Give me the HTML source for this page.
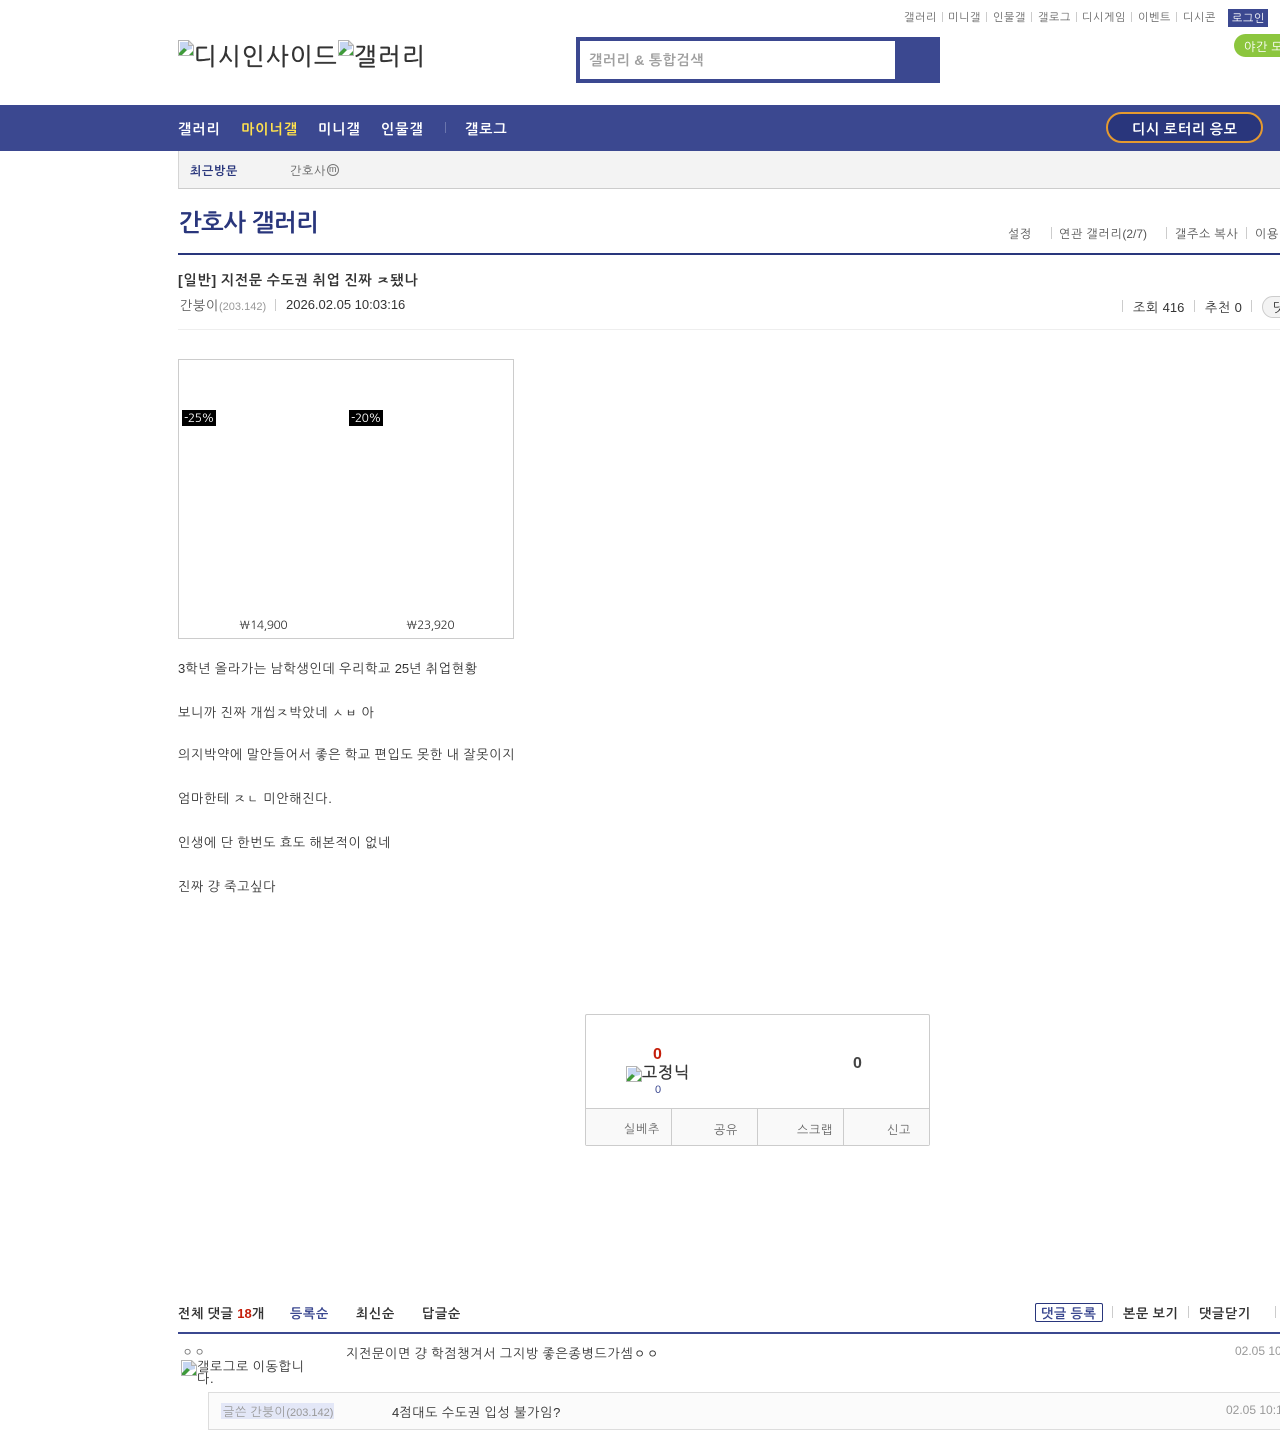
<!DOCTYPE html>
<html lang="ko"><head><meta charset="utf-8"><title>간호사 갤러리</title>
<style>
html,body{margin:0;padding:0;background:#fff}
body{position:relative;width:1280px;height:1438px;overflow:hidden;font-family:"Liberation Sans","NanumGothic","Noto Sans CJK KR",sans-serif;color:#333}
.t,.b,.s{position:absolute}
.t{white-space:nowrap;line-height:20px;height:20px;letter-spacing:.06em;word-spacing:-.06em}
.n{letter-spacing:0;word-spacing:0}
.s{width:1px;background:#ccc}
.i{position:absolute;width:16px;height:16px}
.top{font-size:11px;color:#666;top:8px}
.t.nav{font-size:14px;font-weight:bold;color:#fff;top:119px;letter-spacing:.08em;word-spacing:-.08em}
.lnk{font-size:12px;color:#555;top:224px}
.m{font-size:13px;color:#333;top:298px}
.p{font-size:13px;color:#333;left:178px}
.bt{font-size:12px;color:#666}
.cm{font-size:13px;font-weight:bold;color:#333;top:1304px}
.t.w{font-family:"NanumGothic","Liberation Sans",sans-serif;letter-spacing:-.5px;word-spacing:0}
</style></head><body>
<svg width="0" height="0" style="position:absolute"><defs><symbol id="br" viewBox="0 0 16 16"><path d="M.5.5h10l5 5v10H.5z" fill="#fff" stroke="#b5b5b5"/><path d="M10.5.5v5h5z" fill="#e4e4e4" stroke="#b5b5b5"/><path d="M2 2h8v4h4v3L2 12z" fill="#c6d6f2"/><path d="M1 15v-2l5-5 3 2-5 5z" fill="#3f9a3a"/><path d="M11 15l4-4v4z" fill="#3f9a3a"/></symbol></defs></svg>

<span class="t top" style="left:904px">갤러리</span><div class="s" style="left:942px;top:12px;height:10px"></div>
<span class="t top" style="left:948px">미니갤</span><div class="s" style="left:986px;top:12px;height:10px"></div>
<span class="t top" style="left:993px">인물갤</span><div class="s" style="left:1031px;top:12px;height:10px"></div>
<span class="t top" style="left:1038px">갤로그</span><div class="s" style="left:1076px;top:12px;height:10px"></div>
<span class="t top" style="left:1082px">디시게임</span><div class="s" style="left:1131px;top:12px;height:10px"></div>
<span class="t top" style="left:1138px">이벤트</span><div class="s" style="left:1176px;top:12px;height:10px"></div>
<span class="t top" style="left:1183px">디시콘</span>
<div class="b" style="left:1228px;top:9px;width:40px;height:18px;background:#3b4890"></div>
<span class="t top" style="left:1232px;top:9px;color:#fff">로그인</span>
<div class="b" style="left:1234px;top:34px;width:70px;height:23px;border-radius:12px;background:#8cc63e"></div>
<span class="t" style="left:1244px;top:37px;font-size:12px;color:#fff">야간 모드</span>

<svg class="i" style="left:178px;top:40px"><use href="#br"/></svg>
<span class="t" style="left:194px;top:46px;height:24px;line-height:24px;font-size:24px;color:#333;-webkit-text-stroke:.5px #333">디시인사이드</span>
<svg class="i" style="left:338px;top:40px"><use href="#br"/></svg>
<span class="t" style="left:354px;top:46px;height:24px;line-height:24px;font-size:24px;color:#333;-webkit-text-stroke:.5px #333">갤러리</span>

<div class="b" style="left:576px;top:37px;width:364px;height:46px;background:#3b4890"></div>
<div class="b" style="left:580px;top:41px;width:315px;height:38px;background:#fff"></div>
<span class="t" style="left:589px;top:50px;font-size:14px;font-weight:bold;color:#a0a0a0;letter-spacing:.045em;word-spacing:-.045em">갤러리 &amp; 통합검색</span>

<div class="b" style="left:0;top:105px;width:1280px;height:46px;background:#3b4890"></div>
<span class="t nav" style="left:178px">갤러리</span>
<span class="t nav" style="left:241px;color:#ffe14d">마이너갤</span>
<span class="t nav" style="left:318px">미니갤</span>
<span class="t nav" style="left:381px">인물갤</span>
<div class="s" style="left:445px;top:122px;height:11px;background:#6a75ad"></div>
<span class="t nav" style="left:465px">갤로그</span>
<div class="b" style="left:1106px;top:112px;width:153px;height:27px;border:2px solid #e59a2f;border-radius:16px;background:#29367c"></div>
<span class="t nav" style="left:1132px;letter-spacing:.06em;word-spacing:-.06em">디시 로터리 응모</span>

<div class="b" style="left:178px;top:151px;width:1102px;height:37px;background:#f3f3f3;border-left:1px solid #d5d5d5;border-bottom:1px solid #ccc"></div>
<span class="t" style="left:190px;top:161px;font-size:12px;font-weight:bold;color:#29367c">최근방문</span>
<span class="t" style="left:290px;top:161px;font-size:12px;color:#666">간호사</span>
<div class="b" style="left:327px;top:164px;width:10px;height:10px;border:1px solid #777;border-radius:50%"></div>
<span class="t" style="left:329px;top:159px;font-size:9px;color:#666">m</span>

<span class="t" style="left:179px;top:208px;height:32px;line-height:32px;font-size:24px;font-weight:bold;color:#29367c;letter-spacing:-.4px;word-spacing:0">간호사 갤러리</span>
<span class="t lnk" style="left:1008px">설정</span><div class="s" style="left:1051px;top:227px;height:12px"></div>
<span class="t lnk" style="left:1059px">연관 갤러리<span class="n">(2/7)</span></span><div class="s" style="left:1166px;top:227px;height:12px"></div>
<span class="t lnk" style="left:1175px">갤주소 복사</span><div class="s" style="left:1246px;top:227px;height:12px"></div>
<span class="t lnk" style="left:1255px">이용</span>
<div class="b" style="left:178px;top:253px;width:1102px;height:2px;background:#29367c"></div>

<span class="t" style="left:178px;top:270px;font-size:14px;font-weight:bold;color:#333">[일반] 지전문 수도권 취업 진짜 ㅈ됐나</span>
<span class="t" style="left:180px;top:296px;font-size:13px;color:#555">간붕이<span class="n" style="font-size:11px;color:#999">(203.142)</span></span>
<div class="s" style="left:275px;top:299px;height:12px"></div>
<span class="t n" style="left:286px;top:295px;font-size:13px;color:#333">2026.02.05 10:03:16</span>
<div class="s" style="left:1122px;top:300px;height:12px"></div><span class="t m" style="left:1133px">조회 <span class="n">416</span></span>
<div class="s" style="left:1194px;top:300px;height:12px"></div><span class="t m" style="left:1205px">추천 <span class="n">0</span></span>
<div class="s" style="left:1251px;top:300px;height:12px"></div>
<div class="b" style="left:1262px;top:296px;width:60px;height:20px;border:1px solid #ccc;border-radius:11px;background:#f3f3f3"></div>
<span class="t m" style="left:1273px">댓글 18</span>
<div class="b" style="left:178px;top:329px;width:1102px;height:1px;background:#eee"></div>

<div class="b" style="left:178px;top:359px;width:334px;height:278px;border:1px solid #ccc"></div>
<div class="b" style="left:182px;top:410px;width:34px;height:16px;background:#000"></div>
<span class="t w" style="left:184px;top:408px;font-size:12px;color:#fff">-25%</span>
<div class="b" style="left:349px;top:410px;width:34px;height:16px;background:#000"></div>
<span class="t w" style="left:351px;top:408px;font-size:12px;color:#fff">-20%</span>
<span class="t w" style="left:239px;top:615px;font-size:12px;color:#333">₩14,900</span>
<span class="t w" style="left:406px;top:615px;font-size:12px;color:#333">₩23,920</span>

<span class="t p" style="top:659px"><span class="n">3</span>학년 올라가는 남학생인데 우리학교 <span class="n">25</span>년 취업현황</span>
<span class="t p" style="top:703px">보니까 진짜 개씹ㅈ박았네 ㅅㅂ 아</span>
<span class="t p" style="top:745px">의지박약에 말안들어서 좋은 학교 편입도 못한 내 잘못이지</span>
<span class="t p" style="top:789px">엄마한테 ㅈㄴ 미안해진다.</span>
<span class="t p" style="top:833px">인생에 단 한번도 효도 해본적이 없네</span>
<span class="t p" style="top:877px">진짜 걍 죽고싶다</span>

<div class="b" style="left:585px;top:1014px;width:343px;height:130px;border:1px solid #ccc;border-radius:2px"></div>
<div class="b" style="left:586px;top:1108px;width:343px;height:37px;background:#f9f9f9;border-top:1px solid #ccc;box-sizing:border-box"></div>
<div class="s" style="left:671px;top:1108px;height:37px"></div>
<div class="s" style="left:757px;top:1108px;height:37px"></div>
<div class="s" style="left:843px;top:1108px;height:37px"></div>
<span class="t n" style="left:653px;top:1045px;font-size:16px;font-weight:bold;color:#c41e0a">0</span>
<svg class="i" style="left:626px;top:1066px"><use href="#br"/></svg>
<span class="t" style="left:642px;top:1064px;font-size:16px;color:#333;-webkit-text-stroke:.4px #333">고정닉</span>
<span class="t n" style="left:655px;top:1080px;font-size:11px;color:#3b4890">0</span>
<span class="t n" style="left:853px;top:1054px;font-size:16px;font-weight:bold;color:#444">0</span>
<span class="t bt" style="left:624px;top:1119px">실베추</span>
<span class="t bt" style="left:714px;top:1120px">공유</span>
<span class="t bt" style="left:797px;top:1120px">스크랩</span>
<span class="t bt" style="left:887px;top:1120px">신고</span>

<span class="t cm" style="left:178px">전체 댓글 <span class="n" style="color:#c41e0a">18</span>개</span>
<span class="t cm" style="left:290px;color:#3b4890">등록순</span>
<span class="t cm" style="left:356px">최신순</span>
<span class="t cm" style="left:422px">답글순</span>
<div class="b" style="left:1035px;top:1303px;width:66px;height:17px;border:1px solid #29367c;border-radius:2px"></div>
<span class="t cm" style="left:1041px;color:#3b4890">댓글 등록</span>
<div class="s" style="left:1112px;top:1306px;height:12px"></div>
<span class="t cm" style="left:1123px">본문 보기</span>
<div class="s" style="left:1188px;top:1306px;height:12px"></div>
<span class="t cm" style="left:1199px">댓글닫기</span>
<div class="s" style="left:1275px;top:1306px;height:12px"></div>
<div class="b" style="left:178px;top:1332px;width:1102px;height:2px;background:#3b4890"></div>

<span class="t" style="left:182px;top:1342px;font-size:12px;color:#777">ㅇㅇ</span>
<svg class="i" style="left:181px;top:1360px"><use href="#br"/></svg>
<span class="t" style="left:197px;top:1357px;font-size:13px;color:#333">갤로그로 이동합니</span>
<span class="t" style="left:197px;top:1369px;font-size:13px;color:#333">다.</span>
<span class="t" style="left:346px;top:1344px;font-size:13px;color:#333">지전문이면 걍 학점챙겨서 그지방 좋은종병드가셈ㅇㅇ</span>
<span class="t n" style="left:1235px;top:1341px;font-size:12px;color:#999">02.05 10:02:11</span>

<div class="b" style="left:208px;top:1392px;width:1072px;height:36px;background:#fbfbfb;border:1px solid #ddd;border-right:0"></div>
<div class="b" style="left:221px;top:1403px;width:113px;height:16px;background:#e3e7f7"></div>
<span class="t" style="left:223px;top:1402px;font-size:12px;color:#999">글쓴 간붕이<span class="n" style="font-size:11px">(203.142)</span></span>
<span class="t" style="left:392px;top:1403px;font-size:13px;color:#333"><span class="n">4</span>점대도 수도권 입성 불가임?</span>
<span class="t n" style="left:1226px;top:1400px;font-size:12px;color:#999">02.05 10:15:20</span>
</body></html>
